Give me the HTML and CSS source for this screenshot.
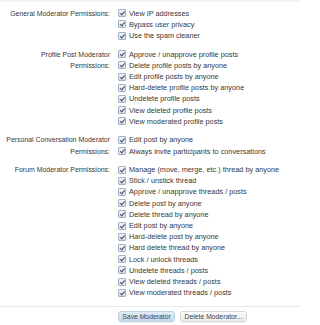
FILE: index.html
```html
<!DOCTYPE html>
<html>
<head>
<meta charset="utf-8">
<link rel="stylesheet" href="styles.css">
</head>
<body>
<form class="page">
  <div class="group">
    <div class="label">General Moderator Permissions:</div>
    <ul class="opts">
      <li><span class="cb"></span>View IP addresses</li>
      <li><span class="cb"></span>Bypass user privacy</li>
      <li><span class="cb"></span>Use the spam cleaner</li>
    </ul>
  </div>
  <div class="group">
    <div class="label"><span class="ln">Profile Post Moderator</span><span class="ln">Permissions:</span></div>
    <ul class="opts">
      <li><span class="cb"></span>Approve / unapprove profile posts</li>
      <li><span class="cb"></span>Delete profile posts by anyone</li>
      <li><span class="cb"></span>Edit profile posts by anyone</li>
      <li><span class="cb"></span>Hard-delete profile posts by anyone</li>
      <li><span class="cb"></span>Undelete profile posts</li>
      <li><span class="cb"></span>View deleted profile posts</li>
      <li><span class="cb"></span>View moderated profile posts</li>
    </ul>
  </div>
  <div class="group">
    <div class="label"><span class="ln">Personal Conversation Moderator</span><span class="ln">Permissions:</span></div>
    <ul class="opts">
      <li><span class="cb"></span>Edit post by anyone</li>
      <li><span class="cb"></span>Always invite participants to conversations</li>
    </ul>
  </div>
  <div class="group">
    <div class="label">Forum Moderator Permissions:</div>
    <ul class="opts">
      <li><span class="cb"></span>Manage (move, merge, etc.) thread by anyone</li>
      <li><span class="cb"></span>Stick / unstick thread</li>
      <li><span class="cb"></span>Approve / unapprove threads / posts</li>
      <li><span class="cb"></span>Delete post by anyone</li>
      <li><span class="cb"></span>Delete thread by anyone</li>
      <li><span class="cb"></span>Edit post by anyone</li>
      <li><span class="cb"></span>Hard-delete post by anyone</li>
      <li><span class="cb"></span>Hard delete thread by anyone</li>
      <li><span class="cb"></span>Lock / unlock threads</li>
      <li><span class="cb"></span>Undelete threads / posts</li>
      <li><span class="cb"></span>View deleted threads / posts</li>
      <li><span class="cb"></span>View moderated threads / posts</li>
    </ul>
  </div>
  <div class="actions">
    <span class="btn primary">Save Moderator</span>
    <span class="btn">Delete Moderator...</span>
  </div>
</form>
</body>
</html>
```
FILE: styles.css
```css
html, body {
  margin: 0;
  padding: 0;
  background: #ffffff;
}
body {
  font-family: "Liberation Sans", Arial, sans-serif;
  font-size: 7.3px;
  color: #383838;
  width: 300px;
  height: 325px;
  overflow: hidden;
  border-top: 2px solid #eef3f8;
  box-sizing: border-box;
}
.page {
  padding-top: 5.7px;
}
.group {
  display: grid;
  grid-template-columns: 110px 1fr;
  column-gap: 8px;
  align-items: start;
  margin-bottom: 7.4px;
}
.label {
  display: flex;
  flex-direction: column;
  align-items: flex-end;
  white-space: nowrap;
  font-size: 6.95px;
  color: #383838;
}
.label, .ln {
  line-height: 11.2px;
}
.ln {
  display: block;
  height: 11.2px;
}
.opts {
  list-style: none;
  margin: 0;
  padding: 0;
}
.opts li {
  display: flex;
  align-items: center;
  white-space: nowrap;
  height: 11.2px;
  line-height: 11.2px;
}
.cb {
  width: 6px;
  height: 6px;
  border: 1px solid #a3b0bd;
  border-radius: 1px;
  background: linear-gradient(#f4f6f9, #dfe5ec);
  margin-right: 3px;
  flex: none;
  position: relative;
}
.cb::after {
  content: "";
  position: absolute;
  left: 2px;
  top: 0px;
  width: 1.6px;
  height: 3.6px;
  border-right: 1.2px solid #3d4f73;
  border-bottom: 1.2px solid #3d4f73;
  transform: rotate(40deg);
}
.actions {
  margin-top: 8px;
  border-top: 1px solid #e6ebf0;
  padding: 4px 0 0 118px;
  display: flex;
  gap: 5px;
}
.btn {
  display: flex;
  align-items: center;
  justify-content: center;
  box-sizing: border-box;
  white-space: nowrap;
  font-size: 6.8px;
  color: #3c4650;
  height: 11px;
  border: 1px solid #d3d8dd;
  border-radius: 3px;
  background: linear-gradient(#fbfbfb, #ececec);
  box-shadow: 0 1px 1px rgba(0,0,0,0.06);
}
.btn.primary {
  width: 57px;
  background: linear-gradient(#e2edf7, #c6daeb);
  border-color: #bed1e2;
}
.btn:not(.primary) {
  width: 67px;
}
```
